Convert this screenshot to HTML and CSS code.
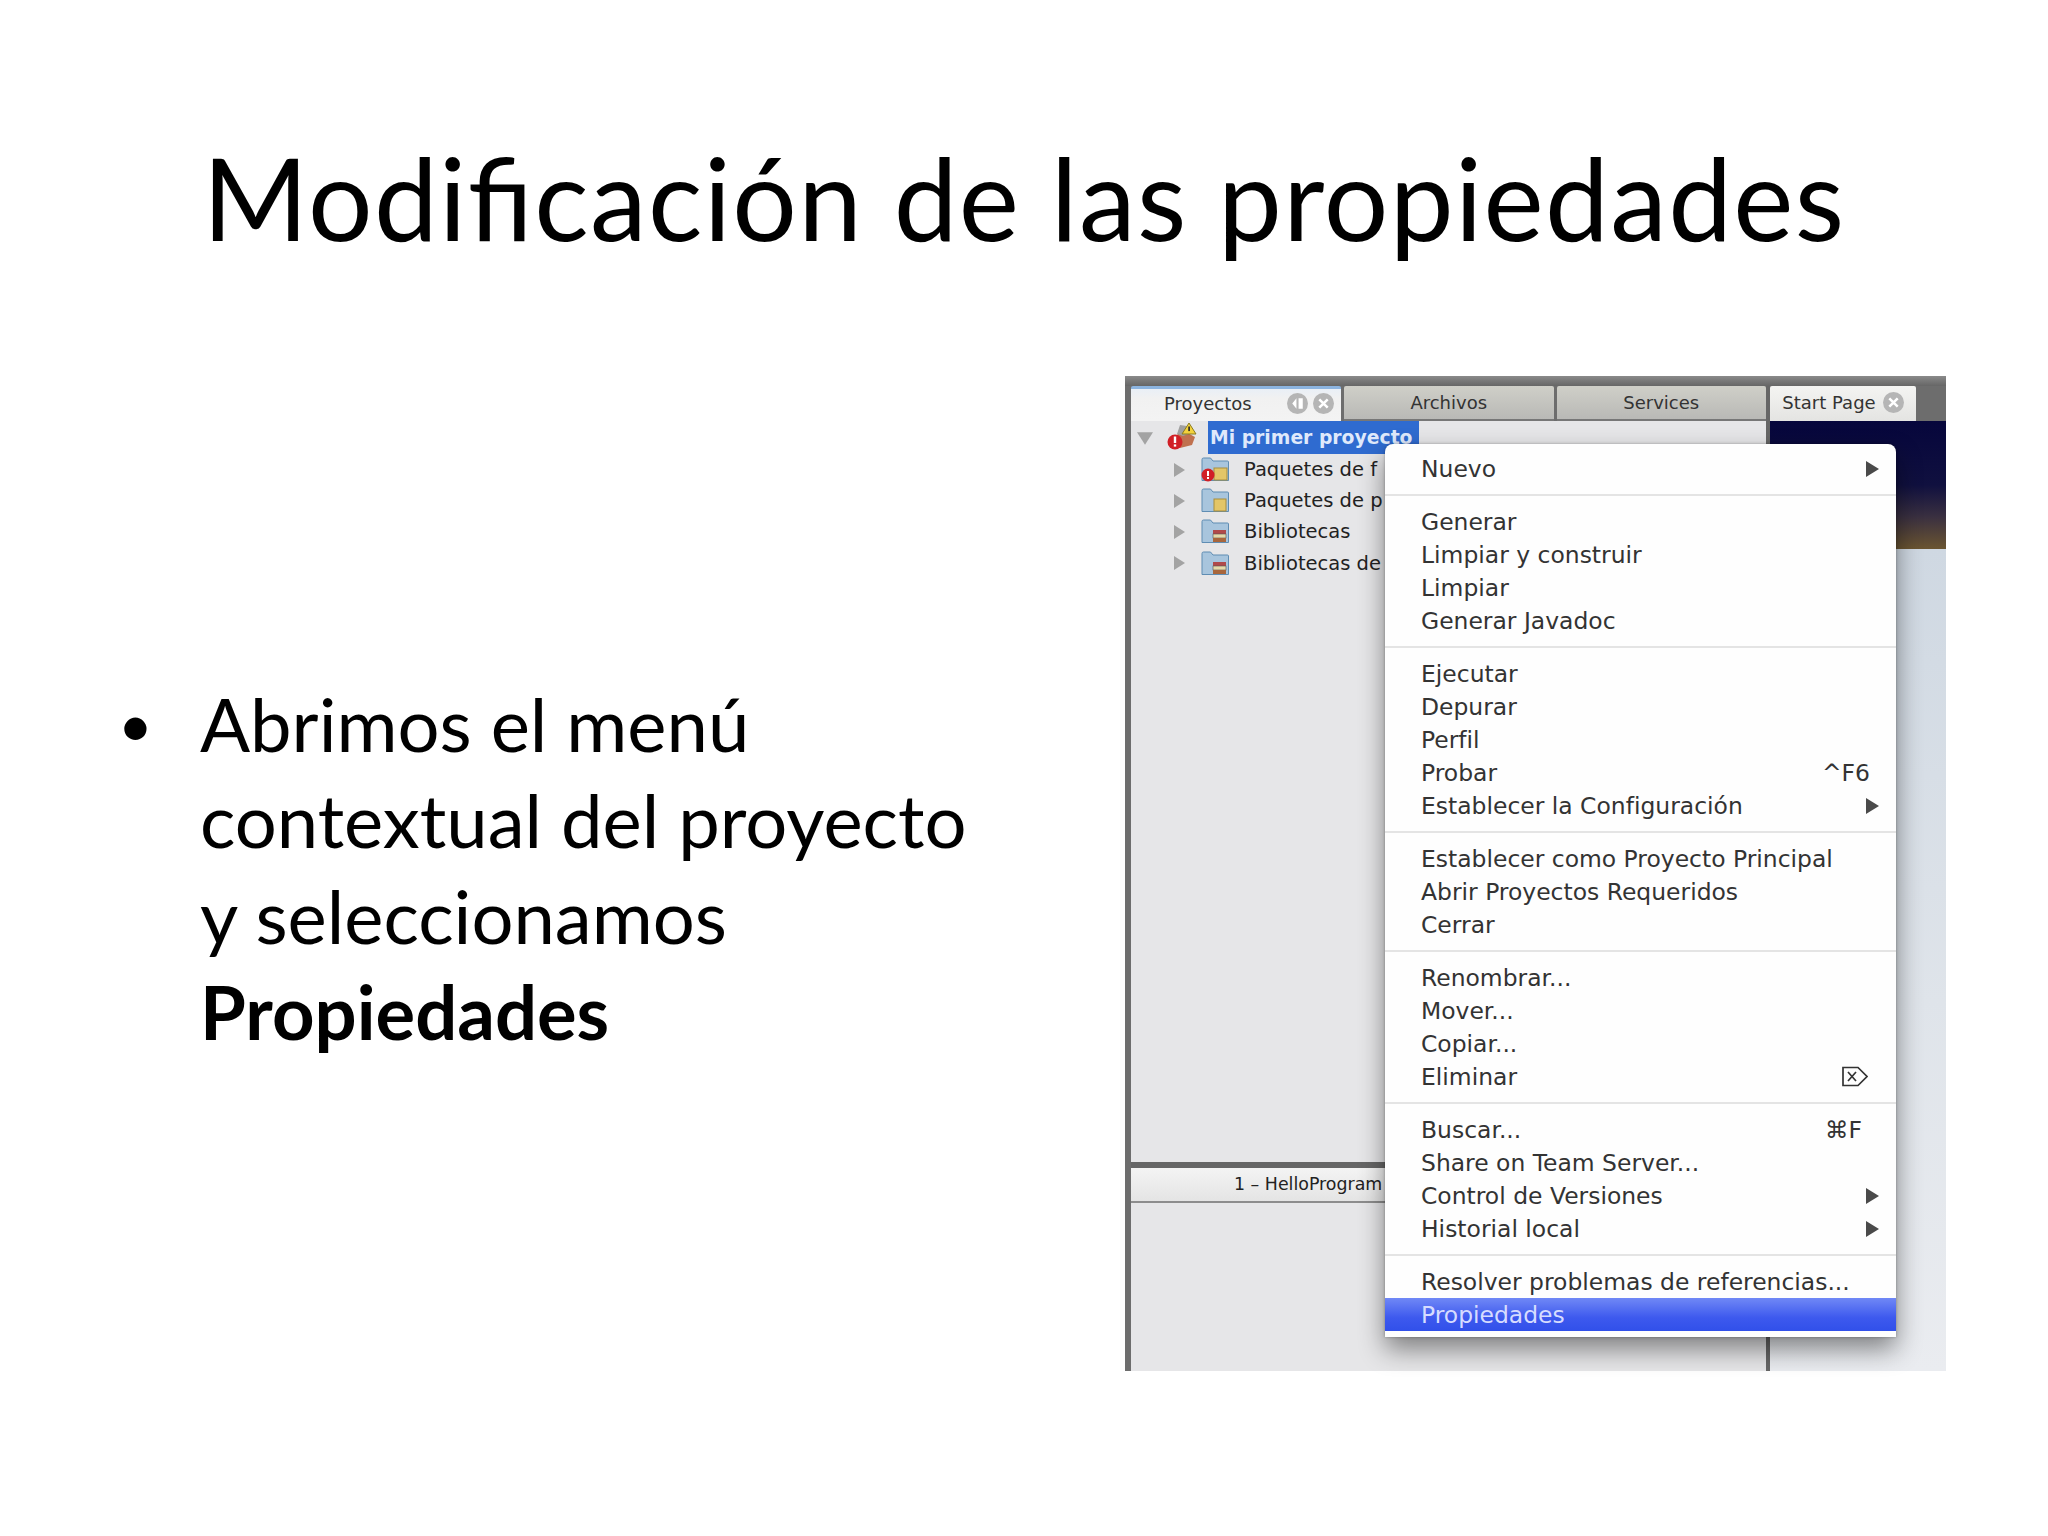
FILE: index.html
```html
<!DOCTYPE html>
<html lang="es">
<head>
<meta charset="utf-8">
<title>Modificación de las propiedades</title>
<link rel="stylesheet" href="styles.css">
</head>
<body>
<main class="slide">
  <header class="head"><h1 class="title">Modificación de las propiedades</h1></header>
  <section class="content">
    <div class="text">
      <span class="bullet">•</span>
      <p class="para">Abrimos el menú<br>contextual del proyecto<br>y seleccionamos<br><strong>Propiedades</strong></p>
    </div>
    <figure class="ide">
      <div class="topbar"></div>
      <div class="main">
        <div class="left">
          <div class="tabs">
            <div class="tab active">
              <span class="tab-name">Proyectos</span>
              <span class="dot"><svg viewBox="0 0 20 20"><path d="M9 5 5 10l4 5zM11 5h4v10h-4z" fill="#fff"/></svg></span>
              <span class="dot"><svg viewBox="0 0 20 20"><path d="M6 6l8 8M14 6l-8 8" stroke="#fff" stroke-width="2.4"/></svg></span>
            </div>
            <div class="tab plain">Archivos</div>
            <div class="tab plain">Services</div>
          </div>
          <div class="tree">
            <div class="root">
              <svg class="tri" viewBox="0 0 14 14"><path d="M0 2h14L7 13z" fill="#a3a3a3"/></svg>
              <svg class="proj" viewBox="0 0 30 30">
                <path d="M9 15 15 9l13 7-3 8-12 3z" fill="#c0714f"/>
                <path d="M10 13l3-9 7 1 2 8-6 2z" fill="#a0a0a0"/>
                <path d="M22 2l7 11H15z" fill="#f3d23c" stroke="#8a7a20"/>
                <rect x="21.3" y="5.5" width="1.6" height="4.6" fill="#222"/>
                <circle cx="8" cy="21" r="7.5" fill="#d11f26"/>
                <rect x="6.8" y="15.5" width="2.4" height="6.5" fill="#fff"/><rect x="6.8" y="23.4" width="2.4" height="2.2" fill="#fff"/>
              </svg>
              <span class="sel">Mi primer proyecto</span>
            </div>
            <div class="row">
              <svg class="tri small" viewBox="0 0 14 14"><path d="M2 0l11 7-11 7z" fill="#a3a3a3"/></svg>
              <svg class="folder" viewBox="0 0 28 25">
                <path d="M1 2.5Q1 1 2.5 1h7L12 4h14.500Q27.500 4 27.500 5v18.500H1z" fill="#a8c5dd" stroke="#5f8db3"/>
                <rect x="13" y="11" width="13" height="12" fill="#e3c668" stroke="#a88d3d"/>
                <circle cx="7" cy="18" r="6.500" fill="#d11f26"/>
                <rect x="6" y="14" width="2" height="5" fill="#fff"/><rect x="6" y="20" width="2" height="2" fill="#fff"/>
              </svg>
              <span>Paquetes de f</span>
            </div>
            <div class="row">
              <svg class="tri small" viewBox="0 0 14 14"><path d="M2 0l11 7-11 7z" fill="#a3a3a3"/></svg>
              <svg class="folder" viewBox="0 0 28 25">
                <path d="M1 2.5Q1 1 2.5 1h7L12 4h14.500Q27.500 4 27.500 5v18.500H1z" fill="#a8c5dd" stroke="#5f8db3"/>
                <rect x="13" y="11" width="12" height="12" fill="#e3c668" stroke="#a88d3d"/>
              </svg>
              <span>Paquetes de p</span>
            </div>
            <div class="row">
              <svg class="tri small" viewBox="0 0 28 28"><path d="M4 0l22 14-22 14z" fill="#a3a3a3"/></svg>
              <svg class="folder" viewBox="0 0 28 25">
                <path d="M1 2.5Q1 1 2.5 1h7L12 4h14.500Q27.500 4 27.500 5v18.500H1z" fill="#a8c5dd" stroke="#5f8db3"/>
                <rect x="12" y="11" width="13" height="4" fill="#b04a4a"/>
                <rect x="12" y="15" width="13" height="4" fill="#e6d9a8" stroke="#555" stroke-width=".6"/>
                <rect x="12" y="19" width="13" height="4" fill="#a8663c"/>
              </svg>
              <span>Bibliotecas</span>
            </div>
            <div class="row">
              <svg class="tri small" viewBox="0 0 28 28"><path d="M4 0l22 14-22 14z" fill="#a3a3a3"/></svg>
              <svg class="folder" viewBox="0 0 28 25">
                <path d="M1 2.5Q1 1 2.5 1h7L12 4h14.500Q27.500 4 27.500 5v18.500H1z" fill="#a8c5dd" stroke="#5f8db3"/>
                <rect x="12" y="11" width="13" height="4" fill="#b04a4a"/>
                <rect x="12" y="15" width="13" height="4" fill="#e6d9a8" stroke="#555" stroke-width=".6"/>
                <rect x="12" y="19" width="13" height="4" fill="#a8663c"/>
              </svg>
              <span>Bibliotecas de</span>
            </div>
          </div>
          <div class="split"></div>
          <div class="output-tab">1 – HelloProgram</div>
          <div class="output"></div>
        </div>
        <div class="right">
          <div class="tabs">
            <div class="tab start">
              <span class="tab-name">Start Page</span>
              <span class="dot"><svg viewBox="0 0 20 20"><path d="M6 6l8 8M14 6l-8 8" stroke="#fff" stroke-width="2.4"/></svg></span>
            </div>
          </div>
          <div class="banner"></div>
          <div class="page"></div>
        </div>
      </div>
      <nav class="menu">
        <div class="group">
          <div class="item"><span>Nuevo</span><i class="arrow"></i></div>
        </div>
        <div class="group">
          <div class="item">Generar</div>
          <div class="item">Limpiar y construir</div>
          <div class="item">Limpiar</div>
          <div class="item">Generar Javadoc</div>
        </div>
        <div class="group">
          <div class="item">Ejecutar</div>
          <div class="item">Depurar</div>
          <div class="item">Perfil</div>
          <div class="item"><span>Probar</span><span class="key">^F6</span></div>
          <div class="item"><span>Establecer la Configuración</span><i class="arrow"></i></div>
        </div>
        <div class="group">
          <div class="item">Establecer como Proyecto Principal</div>
          <div class="item">Abrir Proyectos Requeridos</div>
          <div class="item">Cerrar</div>
        </div>
        <div class="group">
          <div class="item">Renombrar...</div>
          <div class="item">Mover...</div>
          <div class="item">Copiar...</div>
          <div class="item"><span>Eliminar</span>
            <svg class="del" viewBox="0 0 26 21"><path d="M1 1.500h15l9 9-9 9H1z" fill="none" stroke="#333" stroke-width="1.700"/><path d="M6 6l8 9M14 6l-8 9" stroke="#333" stroke-width="1.700"/></svg>
          </div>
        </div>
        <div class="group">
          <div class="item"><span>Buscar...</span><span class="key cmd">⌘F</span></div>
          <div class="item">Share on Team Server...</div>
          <div class="item"><span>Control de Versiones</span><i class="arrow"></i></div>
          <div class="item"><span>Historial local</span><i class="arrow"></i></div>
        </div>
        <div class="group">
          <div class="item">Resolver problemas de referencias...</div>
          <div class="item hot">Propiedades</div>
        </div>
      </nav>
    </figure>
  </section>
</main>
</body>
</html>
```
FILE: styles.css
```css
* { box-sizing: border-box; }
html, body { margin: 0; padding: 0; background: #fff; }
.slide { width: 2048px; height: 1536px; overflow: hidden; background: #fff; font-family: "Lato", "Liberation Sans", sans-serif; color: #000; }
.head { height: 376px; padding-top: 129px; }
.title { margin: 0; text-align: center; font-size: 114px; line-height: 136px; font-weight: 400; letter-spacing: 1.3px; font-feature-settings: "liga" 1; font-variant-ligatures: common-ligatures; }
.content { display: flex; align-items: center; height: 995px; padding-left: 118px; }
.text { display: flex; width: 1007px; font-size: 74.2px; line-height: 96px; padding-bottom: 12px; }
.bullet { width: 82px; flex: none; font-size: 60px; }
.para { margin: 0; }
.para strong { font-weight: 700; }

.ide { position: relative; margin: 0; width: 821px; height: 995px; font-family: "DejaVu Sans", sans-serif; color: #222; display: flex; flex-direction: column; }
.topbar { height: 10px; flex: none; background: linear-gradient(#8a8a8a, #666); }
.main { flex: 1; display: flex; min-height: 0; background: #6d6d6d; }
.left { width: 639px; flex: none; margin-left: 6px; display: flex; flex-direction: column; background: #e6e6e8; border-right: 4px solid #666; }
.right { flex: 1; display: flex; flex-direction: column; min-width: 0; }
.tabs { display: flex; height: 35px; flex: none; gap: 3px; background: #6d6d6d; }
.tab { display: flex; align-items: center; justify-content: center; font-size: 18px; color: #333; border-radius: 2px 2px 0 0; }
.tab.active { width: 210px; background: linear-gradient(#e9eff6, #f1f1f1 30%, #f3f3f3); border-top: 3px solid #8cb4e0; justify-content: flex-start; padding: 0 0 4px 33px; gap: 5px; }
.tab.active .tab-name { margin-right: 30px; }
.tab.plain { flex: 1; background: linear-gradient(#cfcfc8, #b9b9b6); border-bottom: 2px solid #777; }
.tab.start { width: 146px; background: linear-gradient(#f4f4f2, #e4e4e2); gap: 7px; padding-bottom: 2px; }
.dot { display: inline-flex; width: 21px; height: 21px; border-radius: 50%; background: #b5b5b5; }
.dot svg { width: 21px; height: 21px; }

.tree { flex: 1; min-height: 0; background: #e6e6e8; font-size: 19.5px; }
.root { display: flex; align-items: center; height: 33px; padding-left: 6px; }
.tri { width: 16px; height: 16px; flex: none; margin-right: 14px; }
.proj { width: 30px; height: 30px; flex: none; margin-right: 11px; margin-top: -4px; }
.sel { background: #2f6bd0; color: #dfe9fb; font-weight: 700; font-size: 18.8px; width: 211px; height: 33px; line-height: 33px; padding-left: 2px; white-space: nowrap; overflow: hidden; }
.row { display: flex; align-items: center; height: 31.2px; padding-left: 41px; white-space: nowrap; }
.tri.small { width: 14px; height: 14px; margin-right: 15px; }
.folder { width: 28px; height: 25px; flex: none; margin-right: 15px; }

.split { height: 6px; flex: none; background: #666; }
.output-tab { height: 35px; flex: none; background: linear-gradient(#f4f4f4, #e4e4e4); border-bottom: 2px solid #8d8d8d; font-size: 17.4px; line-height: 33px; padding-left: 103px; white-space: nowrap; }
.output { height: 168px; flex: none; background: #e6e6e8; }

.banner { height: 128px; flex: none; background: linear-gradient(#06063c, #10103f 50%, #3a3040 75%, #6a5531); }
.page { flex: 1; background: linear-gradient(#cfd8e2, #dfe4ea 55%, #eaecf0); }

.menu { position: absolute; left: 260px; top: 68px; width: 511px; height: 893px; padding: 8px 0 7px; background: #fefefe; border-radius: 8px 8px 0 0; box-shadow: 0 12px 26px rgba(0,0,0,.45), 0 0 3px rgba(0,0,0,.3); font-size: 23.45px; color: #333; }
.group { border-bottom: 2px solid #e4e4e4; padding-bottom: 9px; margin-bottom: 9px; }
.group:last-child { border-bottom: 0; padding-bottom: 0; margin-bottom: 0; }
.item { display: flex; align-items: center; justify-content: space-between; height: 33px; padding: 0 24px 0 36px; white-space: nowrap; }
.key { margin-right: 2px; }
.key.cmd { margin-right: 10px; }
.arrow { width: 0; height: 0; border-left: 13px solid #4a4a4a; border-top: 8px solid transparent; border-bottom: 8px solid transparent; margin-right: -7px; }
.del { width: 26px; height: 21px; margin-right: 4px; }
.hot { background: linear-gradient(#7088f6, #3d59ee 60%, #3150ea); color: #d6dcff; }
```
